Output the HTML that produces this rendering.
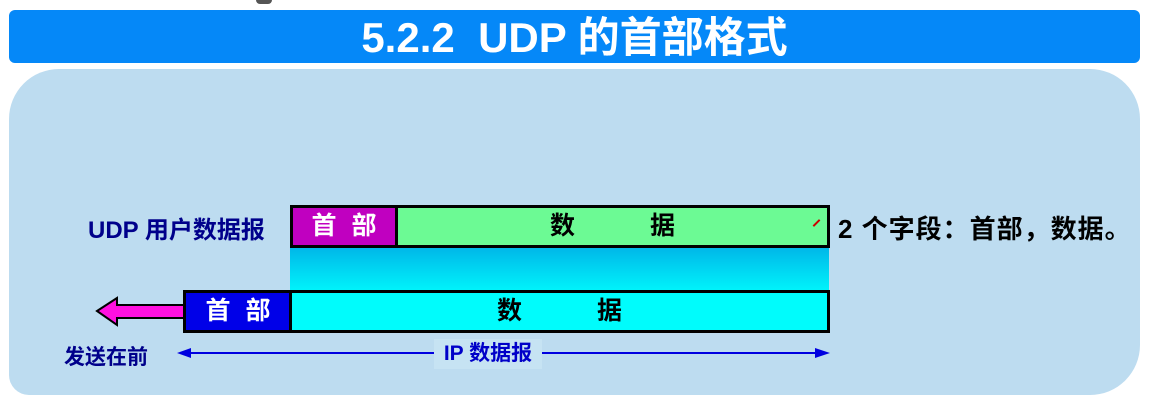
<!DOCTYPE html>
<html><head><meta charset="utf-8"><style>
body{margin:0;width:1151px;height:410px;background:#fff;position:relative;overflow:hidden;font-family:"Liberation Sans","Noto Sans CJK SC",sans-serif}
.a{position:absolute}
.title{left:9px;top:10px;width:1131px;height:53px;background:#0588f8;border-radius:6px;color:#fff;font-size:42px;font-weight:bold;text-align:center;line-height:56px}
.panel{left:9px;top:69px;width:1131px;height:326px;background:#bddcf0;border-radius:50px 50px 50px 20px}
.box{border:3px solid #000;box-sizing:border-box;font-size:25px;font-weight:bold;text-align:center;line-height:36px}
</style></head><body>
<div class="a" style="left:256px;top:0;width:16px;height:4px;background:#555;border-radius:0 0 8px 8px"></div>
<div class="a title">5.2.2&nbsp; UDP 的首部格式</div>
<div class="a panel"></div>
<div class="a" style="left:88px;top:210px;font-size:24px;font-weight:bold;color:#00008b">UDP 用户数据报</div>
<div class="a" style="left:290px;top:247px;width:539px;height:44px;background:linear-gradient(#00b6e8,#00f4fb)"></div>
<div class="a box" style="left:290px;top:205px;width:108px;height:43px;background:#c000c0;color:#fff;word-spacing:8px">首 部</div>
<div class="a box" style="left:395px;top:205px;width:435px;height:43px;background:#6cfa94;word-spacing:68px">数 据</div>
<div class="a" style="left:812px;top:222px;width:9px;height:2px;background:#c00;transform:rotate(-45deg)"></div>
<div class="a" style="left:838px;top:209px;font-size:26px;font-weight:bold;color:#000;letter-spacing:1px">2 个字段：首部，数据。</div>
<svg class="a" style="left:95px;top:295px" width="95" height="34"><polygon points="2,16 22,3 22,10 92,10 92,23 22,23 22,30" fill="#ff10e0" stroke="#000" stroke-width="2"/></svg>
<div class="a box" style="left:183px;top:290px;width:110px;height:43px;background:#0000e8;color:#fff;word-spacing:8px">首 部</div>
<div class="a box" style="left:289px;top:290px;width:541px;height:43px;background:#00fcfc;word-spacing:68px">数 据</div>
<div class="a" style="left:64px;top:341px;font-size:21px;font-weight:bold;color:#00008b">发送在前</div>
<svg class="a" style="left:175px;top:345px" width="660" height="16"><line x1="8" y1="8" x2="645" y2="8" stroke="#0000e0" stroke-width="2"/><polygon points="2,8 16,3 16,13" fill="#0000e0"/><polygon points="655,8 640,3 640,13" fill="#0000e0"/></svg>
<div class="a" style="left:434px;top:339px;width:108px;height:30px;background:#c6e3f3;color:#0000c8;font-size:21px;font-weight:bold;text-align:center;line-height:30px">IP 数据报</div>
</body></html>
